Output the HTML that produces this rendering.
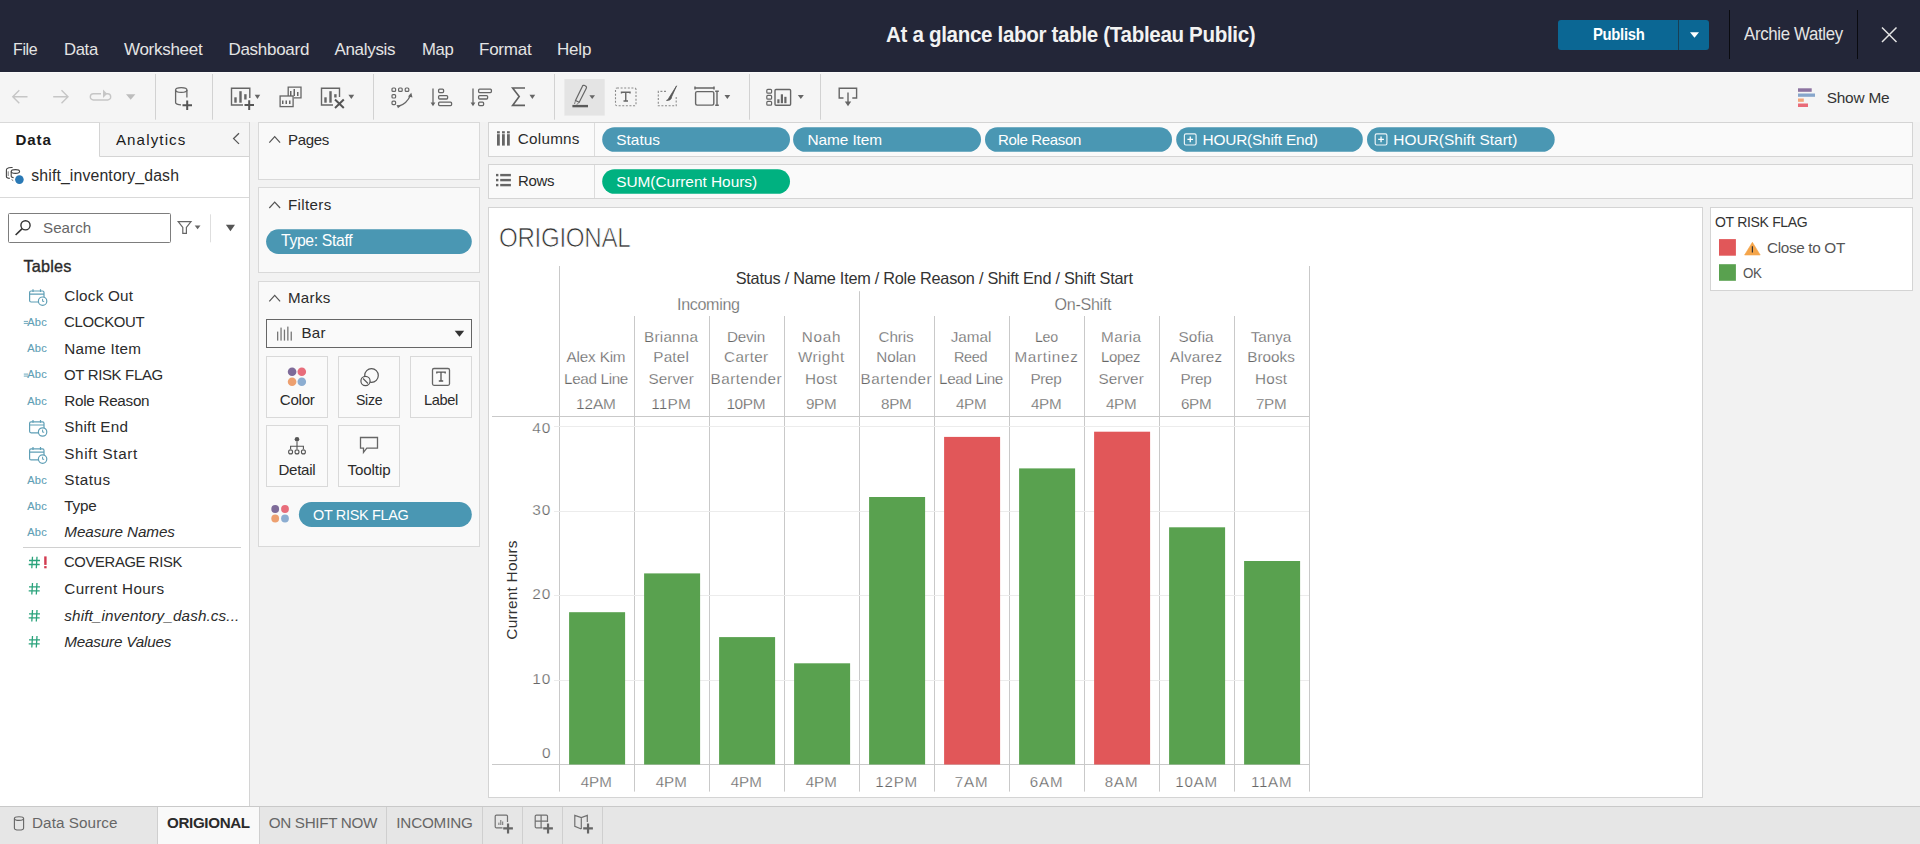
<!DOCTYPE html>
<html><head><meta charset="utf-8"><title>Tableau</title>
<style>
*{box-sizing:border-box;margin:0;padding:0}
html,body{width:1920px;height:844px;overflow:hidden;background:#f2f2f2;font-family:"Liberation Sans",sans-serif}
svg.bg{position:absolute;left:0;top:0}
.t{position:absolute;white-space:nowrap}
</style></head><body>
<svg class="bg" width="1920" height="844" viewBox="0 0 1920 844">
<rect x="0" y="0" width="1920" height="844" fill="#f2f2f2"/>
<rect x="0" y="0" width="1920" height="72" fill="#232638"/>
<rect x="0" y="72" width="1920" height="50" fill="#f5f5f5"/>
<rect x="1558" y="20" width="151" height="30" fill="#0b6794" rx="3"/>
<line x1="1678.5" y1="20" x2="1678.5" y2="50" stroke="#183f55" stroke-width="1"/>
<path d="M1690 32.2H1699L1694.5 37.7Z" fill="#ffffff" stroke="none" stroke-width="1"/>
<line x1="1729.5" y1="10" x2="1729.5" y2="59" stroke="#0a0b10" stroke-width="1"/>
<line x1="1857.5" y1="10" x2="1857.5" y2="59" stroke="#0a0b10" stroke-width="1"/>
<path d="M1882 27.5L1896.5 42M1896.5 27.5L1882 42" fill="none" stroke="#e4e4e4" stroke-width="1.5"/>
<line x1="0" y1="72.5" x2="1920" y2="72.5" stroke="#fafafa" stroke-width="1"/>
<line x1="155.5" y1="74" x2="155.5" y2="119.7" stroke="#d2d2d2" stroke-width="1"/>
<line x1="212.5" y1="74" x2="212.5" y2="119.7" stroke="#d2d2d2" stroke-width="1"/>
<line x1="373.5" y1="74" x2="373.5" y2="119.7" stroke="#d2d2d2" stroke-width="1"/>
<line x1="554.5" y1="74" x2="554.5" y2="119.7" stroke="#d2d2d2" stroke-width="1"/>
<line x1="749.5" y1="74" x2="749.5" y2="119.7" stroke="#d2d2d2" stroke-width="1"/>
<line x1="820.5" y1="74" x2="820.5" y2="119.7" stroke="#d2d2d2" stroke-width="1"/>
<path d="M27.5 96.8H12.8M19.3 90.3L12.8 96.8L19.3 103.3" fill="none" stroke="#c6c6c6" stroke-width="1.4"/>
<path d="M53.2 96.8H68M61.5 90.3L68 96.8L61.5 103.3" fill="none" stroke="#c6c6c6" stroke-width="1.4"/>
<path d="M101 93.8H93.4A3.1 3.1 0 0 0 93.4 100H107.6A3.1 3.1 0 0 0 107.6 93.8H106" fill="none" stroke="#c6c6c6" stroke-width="1.4"/>
<path d="M103 89.5L107.2 93.8L103 98Z" fill="#c6c6c6" stroke="none" stroke-width="1"/>
<path d="M126 94.2H135.4L130.7 99.8Z" fill="#bdbdbd" stroke="none" stroke-width="1"/>
<path d="M175.6 90V102.5A5.5 2.2 0 0 0 181 104.8M186.9 90V97.5" fill="none" stroke="#666" stroke-width="1.3"/>
<ellipse cx="181.25" cy="90" rx="5.7" ry="2.4" fill="none" stroke="#666" stroke-width="1.3"/>
<path d="M182.5 105.2H192M187.2 100.4V110" fill="none" stroke="#555" stroke-width="2"/>
<path d="M243 105H231.5V88.3H249.8V98" fill="none" stroke="#666" stroke-width="1.4"/>
<rect x="234.3" y="97.3" width="2.3999999999999773" height="5.400000000000006" fill="#666"/>
<rect x="239.3" y="91.2" width="2.3999999999999773" height="11.5" fill="#666"/>
<rect x="244.2" y="94.2" width="2.4000000000000057" height="5.299999999999997" fill="#666"/>
<path d="M244.5 105H254M249.2 100.3V110" fill="none" stroke="#555" stroke-width="2"/>
<path d="M254.7 94.8H260.2L257.45 99Z" fill="#666" stroke="none" stroke-width="1"/>
<path d="M288.2 96V87.1H301V97.8H294" fill="none" stroke="#666" stroke-width="1.3"/>
<rect x="290" y="91" width="1.5" height="5" fill="#666"/>
<rect x="293.5" y="89" width="1.5" height="7" fill="#666"/>
<rect x="297" y="92" width="1.5" height="4" fill="#666"/>
<rect x="280.1" y="96" width="13.0" height="10.599999999999994" fill="none" stroke="#666" stroke-width="1.3"/>
<rect x="282" y="100.5" width="1.5" height="3.5" fill="#666"/>
<rect x="285.5" y="100.5" width="1.5" height="3.5" fill="#666"/>
<rect x="289" y="100.5" width="1.5" height="3.5" fill="#666"/>
<path d="M333 105H321.5V88.3H339.5V97" fill="none" stroke="#666" stroke-width="1.4"/>
<rect x="324.3" y="97.3" width="2.3999999999999773" height="5.400000000000006" fill="#666"/>
<rect x="329.3" y="91.2" width="2.3999999999999773" height="11.5" fill="#666"/>
<rect x="334.2" y="94.2" width="2.400000000000034" height="3.299999999999997" fill="#666"/>
<path d="M335 99.5L343.8 108M343.8 99.5L335 108" fill="none" stroke="#555" stroke-width="2"/>
<path d="M348.4 94.8H354.2L351.29999999999995 99Z" fill="#666" stroke="none" stroke-width="1"/>
<rect x="392" y="88" width="3.6000000000000227" height="3.4000000000000057" fill="none" stroke="#666" stroke-width="1.2" rx="1"/>
<rect x="398.6" y="88" width="3.6000000000000227" height="3.4000000000000057" fill="none" stroke="#666" stroke-width="1.2" rx="1"/>
<rect x="405.2" y="88" width="3.6000000000000227" height="3.4000000000000057" fill="none" stroke="#666" stroke-width="1.2" rx="1"/>
<rect x="392" y="94.6" width="3.6000000000000227" height="3.4000000000000057" fill="none" stroke="#666" stroke-width="1.2" rx="1"/>
<rect x="392" y="101.2" width="3.6000000000000227" height="3.4000000000000057" fill="none" stroke="#666" stroke-width="1.2" rx="1"/>
<path d="M398 106.5Q407 104 410.5 95" fill="none" stroke="#666" stroke-width="1.3"/>
<path d="M408 96.5L411.3 92.8L412.5 97.5Z" fill="#666" stroke="none" stroke-width="1"/>
<path d="M396.5 105L398 108.2L401 105.5Z" fill="#666" stroke="none" stroke-width="1"/>
<path d="M433 88.5V105" fill="none" stroke="#666" stroke-width="1.3"/>
<path d="M430.6 102.5L433 106.3L435.4 102.5Z" fill="#666" stroke="none" stroke-width="1"/>
<rect x="438.6" y="89.2" width="5.0" height="3.3999999999999915" fill="none" stroke="#666" stroke-width="1.3" rx="1"/>
<rect x="438.6" y="95.6" width="9.0" height="3.4000000000000057" fill="none" stroke="#666" stroke-width="1.3" rx="1"/>
<rect x="438.6" y="102.2" width="13.0" height="3.3999999999999915" fill="none" stroke="#666" stroke-width="1.3" rx="1"/>
<path d="M473 88.5V105" fill="none" stroke="#666" stroke-width="1.3"/>
<path d="M470.6 102.5L473 106.3L475.4 102.5Z" fill="#666" stroke="none" stroke-width="1"/>
<rect x="478.6" y="89.2" width="12.799999999999955" height="3.3999999999999915" fill="none" stroke="#666" stroke-width="1.3" rx="1"/>
<rect x="478.6" y="95.6" width="9.0" height="3.4000000000000057" fill="none" stroke="#666" stroke-width="1.3" rx="1"/>
<rect x="478.6" y="102.2" width="5.0" height="3.3999999999999915" fill="none" stroke="#666" stroke-width="1.3" rx="1"/>
<path d="M525 88H512.6L519.2 96.6L512.6 105.4H525" fill="none" stroke="#606060" stroke-width="1.6"/>
<path d="M529.5 94.8H535.2L532.35 99Z" fill="#666" stroke="none" stroke-width="1"/>
<rect x="564.4" y="79.1" width="40.30000000000007" height="36.5" fill="#e4e4e4"/>
<path d="M575.5 100.5L582.3 86.5A1.6 1.6 0 0 1 584.8 85.6L585.6 86.1A1.6 1.6 0 0 1 586.3 88.3L579.2 102.3Z" fill="none" stroke="#666" stroke-width="1.2"/>
<path d="M575.5 100.5L574.5 104M579.2 102.3L576.5 104.8" fill="none" stroke="#666" stroke-width="0.8"/>
<rect x="572.4" y="104.9" width="15.600000000000023" height="2.3999999999999915" fill="#5a5a5a"/>
<path d="M589.4 95.3H595L592.2 99Z" fill="#666" stroke="none" stroke-width="1"/>
<rect x="615.5" y="88" width="20.5" height="17.799999999999997" fill="none" stroke="#8a8a8a" stroke-width="1.1" rx="1.5" stroke-dasharray="2,1.6"/>
<path d="M621.5 93.6V92.3H630V93.6M625.75 92.3V101M623.5 101H628" fill="none" stroke="#666" stroke-width="1.4"/>
<path d="M666 91.4H658.3V105.8H676.2V96" fill="none" stroke="#8a8a8a" stroke-width="1.1" stroke-dasharray="2,1.6"/>
<path d="M676.6 85.8L669.2 97.5L668 99.8L666.5 100.4L669.8 100Q672 98 671.5 97Z" fill="#555" stroke="#555" stroke-width="0.8"/>
<path d="M695 86.5V89.5M695 88H714M714 86.5V89.5" fill="none" stroke="#666" stroke-width="1.5"/>
<rect x="695.6" y="91.6" width="18.199999999999932" height="13.5" fill="none" stroke="#666" stroke-width="1.4" rx="1.5"/>
<path d="M715.2 91.3H718.8M717 91.3V105.3M715.2 105.3H718.8" fill="none" stroke="#666" stroke-width="1.4"/>
<path d="M724.5 95H730.2L727.35 99Z" fill="#666" stroke="none" stroke-width="1"/>
<rect x="766.8" y="89.4" width="4.800000000000068" height="3.799999999999997" fill="none" stroke="#666" stroke-width="1.2" rx="1"/>
<rect x="766.8" y="95.4" width="4.800000000000068" height="3.799999999999997" fill="none" stroke="#666" stroke-width="1.2" rx="1"/>
<rect x="766.8" y="101.4" width="4.800000000000068" height="3.799999999999997" fill="none" stroke="#666" stroke-width="1.2" rx="1"/>
<rect x="775" y="89.5" width="15.600000000000023" height="15.799999999999997" fill="none" stroke="#666" stroke-width="1.4" rx="1"/>
<rect x="777.3" y="99.3" width="2.2000000000000455" height="3.9000000000000057" fill="#666"/>
<rect x="780.8" y="94.3" width="2.2000000000000455" height="8.900000000000006" fill="#666"/>
<rect x="784.3" y="96.8" width="2.2000000000000455" height="6.400000000000006" fill="#666"/>
<path d="M797.8 95H803.8L800.8 99Z" fill="#666" stroke="none" stroke-width="1"/>
<path d="M843.5 98H839.2V88.2H856.6V98H852.3" fill="none" stroke="#666" stroke-width="1.4"/>
<path d="M848 92.5V103.5" fill="none" stroke="#666" stroke-width="1.4"/>
<path d="M844.8 101.5L848 106.2L851.2 101.5Z" fill="#666" stroke="none" stroke-width="1"/>
<rect x="1798" y="88.3" width="13.700000000000045" height="3.5" fill="#8c73a0"/>
<rect x="1798" y="93.5" width="17" height="3.299999999999997" fill="#87a6cb"/>
<rect x="1798" y="98.5" width="5.7999999999999545" height="3.299999999999997" fill="#f2a57a"/>
<rect x="1798" y="103.5" width="10" height="3.5" fill="#e96b78"/>
<rect x="0" y="122" width="249.5" height="684.3" fill="#ffffff"/>
<line x1="0" y1="122.5" x2="249.5" y2="122.5" stroke="#d9d9d9" stroke-width="1"/>
<line x1="249.5" y1="122" x2="249.5" y2="806" stroke="#d4d4d4" stroke-width="1"/>
<rect x="99.6" y="122.5" width="149.4" height="34.0" fill="#f5f5f5"/>
<line x1="99.5" y1="122.5" x2="99.5" y2="156.5" stroke="#d4d4d4" stroke-width="1"/>
<line x1="99.5" y1="156.5" x2="249" y2="156.5" stroke="#d4d4d4" stroke-width="1"/>
<path d="M239 133.3L233.6 138.6L239 143.9" fill="none" stroke="#555" stroke-width="1.3"/>
<path d="M12.6 167.5Q8.6 167.3 7 168.6Q6.4 169.3 6.4 170.2V176.6Q6.6 178.2 9.8 178.4" fill="none" stroke="#444" stroke-width="1.1"/>
<path d="M8.2 171.3V176" fill="none" stroke="#444" stroke-width="0.7"/>
<ellipse cx="15.4" cy="171.5" rx="4.2" ry="1.9" fill="#ffffff" stroke="#444" stroke-width="1.1"/>
<path d="M11.2 171.5V176.3Q11.5 177.5 13.6 177.6" fill="none" stroke="#444" stroke-width="1.1"/>
<path d="M11.6 179.6L13.2 180.6" fill="none" stroke="#444" stroke-width="0.8"/>
<circle cx="19.4" cy="179.6" r="4.3" fill="#2a79b5"/>
<line x1="0" y1="197.5" x2="249" y2="197.5" stroke="#d9d9d9" stroke-width="1"/>
<rect x="8.5" y="213.5" width="162.0" height="29.0" fill="#ffffff" stroke="#7d7d7d" stroke-width="1" rx="1"/>
<circle cx="25.5" cy="225.3" r="4.6" fill="none" stroke="#333" stroke-width="1.4"/>
<path d="M22.2 228.6L15.6 235" fill="none" stroke="#333" stroke-width="1.6"/>
<path d="M178.2 221.6H191L186.4 227.5V233.4H182.8V227.5Z" fill="none" stroke="#666" stroke-width="1.2"/>
<path d="M194.7 225.4H200.5L197.6 229.3Z" fill="#666" stroke="none" stroke-width="1"/>
<line x1="210.5" y1="214.3" x2="210.5" y2="242.3" stroke="#dedede" stroke-width="1"/>
<path d="M225.9 224.7H235L230.45 231.3Z" fill="#555" stroke="none" stroke-width="1"/>
<rect x="29.6" y="291.0" width="14.399999999999999" height="11.0" fill="none" stroke="#5f9fb6" stroke-width="1.2" rx="1.5"/>
<path d="M29.6 294.2H44M33 289.2V292.0M40.5 289.2V292.0" fill="none" stroke="#5f9fb6" stroke-width="1.2"/>
<circle cx="42.6" cy="301.2" r="4.2" fill="#ffffff" stroke="#5f9fb6" stroke-width="1.2"/>
<path d="M42.6 298.8V301.4H44.2" fill="none" stroke="#5f9fb6" stroke-width="1"/>
<path d="M23.8 321.4H28M23.8 323.4H28" fill="none" stroke="#5f9fb6" stroke-width="0.9"/>
<path d="M23.8 374.1H28M23.8 376.1H28" fill="none" stroke="#5f9fb6" stroke-width="0.9"/>
<rect x="29.6" y="421.8" width="14.399999999999999" height="11.0" fill="none" stroke="#5f9fb6" stroke-width="1.2" rx="1.5"/>
<path d="M29.6 425.0H44M33 420.0V422.8M40.5 420.0V422.8" fill="none" stroke="#5f9fb6" stroke-width="1.2"/>
<circle cx="42.6" cy="432.0" r="4.2" fill="#ffffff" stroke="#5f9fb6" stroke-width="1.2"/>
<path d="M42.6 429.6V432.2H44.2" fill="none" stroke="#5f9fb6" stroke-width="1"/>
<rect x="29.6" y="448.90000000000003" width="14.399999999999999" height="11.0" fill="none" stroke="#5f9fb6" stroke-width="1.2" rx="1.5"/>
<path d="M29.6 452.1H44M33 447.1V449.90000000000003M40.5 447.1V449.90000000000003" fill="none" stroke="#5f9fb6" stroke-width="1.2"/>
<circle cx="42.6" cy="459.1" r="4.2" fill="#ffffff" stroke="#5f9fb6" stroke-width="1.2"/>
<path d="M42.6 456.70000000000005V459.3H44.2" fill="none" stroke="#5f9fb6" stroke-width="1"/>
<path d="M32.5 556.7L31.8 568.2M37 556.7L36.3 568.2M29 560.5H40M28.7 564.5H39.7" fill="none" stroke="#2ba37c" stroke-width="1.3"/>
<rect x="44.2" y="556.4000000000001" width="2.3999999999999986" height="8.5" fill="#d23b50"/>
<rect x="44.2" y="566.1" width="2.3999999999999986" height="2.2000000000000455" fill="#d23b50"/>
<path d="M32.5 583L31.8 594.5M37 583L36.3 594.5M29 586.8H40M28.7 590.8H39.7" fill="none" stroke="#2ba37c" stroke-width="1.3"/>
<path d="M32.5 610L31.8 621.5M37 610L36.3 621.5M29 613.8H40M28.7 617.8H39.7" fill="none" stroke="#2ba37c" stroke-width="1.3"/>
<path d="M32.5 636L31.8 647.5M37 636L36.3 647.5M29 639.8H40M28.7 643.8H39.7" fill="none" stroke="#2ba37c" stroke-width="1.3"/>
<line x1="23" y1="547.5" x2="241" y2="547.5" stroke="#d0d0d0" stroke-width="1"/>
<rect x="258.5" y="122.5" width="221.0" height="57.0" fill="#f9f9f9" stroke="#d9d9d9" stroke-width="1"/>
<rect x="258.5" y="187.5" width="221.0" height="85.0" fill="#f9f9f9" stroke="#d9d9d9" stroke-width="1"/>
<rect x="258.5" y="281.5" width="221.0" height="265.0" fill="#f9f9f9" stroke="#d9d9d9" stroke-width="1"/>
<path d="M269.3 142.6L274.7 136.7L280.1 142.6" fill="none" stroke="#555" stroke-width="1.2"/>
<path d="M269.3 208.0L274.7 202.1L280.1 208.0" fill="none" stroke="#555" stroke-width="1.2"/>
<path d="M269.3 301.3L274.7 295.40000000000003L280.1 301.3" fill="none" stroke="#555" stroke-width="1.2"/>
<rect x="266.1" y="229.3" width="205.7" height="24.599999999999994" fill="#4a97b3" rx="12.3"/>
<rect x="266.5" y="319.5" width="205.0" height="28.0" fill="#fafafa" stroke="#666" stroke-width="1"/>
<rect x="277.0" y="331.6" width="1.3000000000000114" height="9.0" fill="#777"/>
<rect x="280.4" y="327.6" width="1.3000000000000114" height="13.0" fill="#777"/>
<rect x="283.8" y="329.6" width="1.3000000000000114" height="11.0" fill="#777"/>
<rect x="287.2" y="326.6" width="1.3000000000000114" height="14.0" fill="#777"/>
<rect x="290.6" y="331.6" width="1.3000000000000114" height="9.0" fill="#777"/>
<path d="M454.7 330.7H464.2L459.45 336.8Z" fill="#333" stroke="none" stroke-width="1"/>
<rect x="266.5" y="356.5" width="61.0" height="61.0" fill="#fafafa" stroke="#d9d9d9" stroke-width="1"/>
<rect x="338.5" y="356.5" width="61.0" height="61.0" fill="#fafafa" stroke="#d9d9d9" stroke-width="1"/>
<rect x="410.5" y="356.5" width="61.0" height="61.0" fill="#fafafa" stroke="#d9d9d9" stroke-width="1"/>
<rect x="266.5" y="425.5" width="61.0" height="61.0" fill="#fafafa" stroke="#d9d9d9" stroke-width="1"/>
<rect x="338.5" y="425.5" width="61.0" height="61.0" fill="#fafafa" stroke="#d9d9d9" stroke-width="1"/>
<circle cx="292.1" cy="371.8" r="4.3" fill="#7e6b99"/>
<circle cx="301.8" cy="371.8" r="4.3" fill="#e86d7b"/>
<circle cx="292.1" cy="381.7" r="4.3" fill="#eda070"/>
<circle cx="301.8" cy="381.7" r="4.3" fill="#8cadd1"/>
<circle cx="371.5" cy="375.5" r="6.8" fill="none" stroke="#555" stroke-width="1.2"/>
<circle cx="365.5" cy="381" r="4.6" fill="#f9f9f9" stroke="#555" stroke-width="1.2"/>
<path d="M363 378.5L368 383.5" fill="none" stroke="#555" stroke-width="1.1"/>
<rect x="432.5" y="368.5" width="17.0" height="16.80000000000001" fill="none" stroke="#666" stroke-width="1.3" rx="1.5"/>
<path d="M436.8 373.5V372.2H445.2V373.5M441 372.2V381M438.8 381H443.2" fill="none" stroke="#555" stroke-width="1.3"/>
<circle cx="297" cy="439.3" r="2.3" fill="#555"/>
<path d="M297 441.5V446.2M290.6 449V446.2H303.4V449M297 446.2V449" fill="none" stroke="#555" stroke-width="1.1"/>
<circle cx="290.6" cy="451.9" r="2.0" fill="none" stroke="#555" stroke-width="1.1"/>
<circle cx="297" cy="451.9" r="2.0" fill="none" stroke="#555" stroke-width="1.1"/>
<circle cx="303.4" cy="451.9" r="2.0" fill="none" stroke="#555" stroke-width="1.1"/>
<path d="M360.5 437.5H377.5V448.2H366.8L363.5 452.3V448.2H360.5Z" fill="none" stroke="#666" stroke-width="1.3"/>
<circle cx="275.2" cy="509" r="3.9" fill="#7e6b99"/>
<circle cx="285" cy="509" r="3.9" fill="#e86d7b"/>
<circle cx="275.2" cy="518.5" r="3.9" fill="#eda070"/>
<circle cx="285" cy="518.5" r="3.9" fill="#8cadd1"/>
<rect x="298.9" y="502" width="172.90000000000003" height="25" fill="#4a97b3" rx="12.5"/>
<rect x="488.5" y="122.5" width="1424.0" height="34.0" fill="#fafafa" stroke="#d4d4d4" stroke-width="1"/>
<rect x="488.5" y="164.5" width="1424.0" height="34.0" fill="#fafafa" stroke="#d4d4d4" stroke-width="1"/>
<line x1="594.5" y1="123" x2="594.5" y2="156" stroke="#dcdcdc" stroke-width="1"/>
<line x1="594.5" y1="165" x2="594.5" y2="198" stroke="#dcdcdc" stroke-width="1"/>
<rect x="497" y="134.2" width="2.8000000000000114" height="11.400000000000006" fill="#666"/>
<rect x="497" y="131.2" width="2.8000000000000114" height="2.200000000000017" fill="#666"/>
<rect x="502" y="134.2" width="2.8000000000000114" height="11.400000000000006" fill="#666"/>
<rect x="502" y="131.2" width="2.8000000000000114" height="2.200000000000017" fill="#666"/>
<rect x="507" y="134.2" width="2.8000000000000114" height="11.400000000000006" fill="#666"/>
<rect x="507" y="131.2" width="2.8000000000000114" height="2.200000000000017" fill="#666"/>
<rect x="496" y="173.9" width="2.3999999999999773" height="2.3999999999999773" fill="#666"/>
<rect x="500.2" y="173.9" width="10.699999999999989" height="2.3999999999999773" fill="#666"/>
<rect x="496" y="178.9" width="2.3999999999999773" height="2.3999999999999773" fill="#666"/>
<rect x="500.2" y="178.9" width="10.699999999999989" height="2.3999999999999773" fill="#666"/>
<rect x="496" y="183.9" width="2.3999999999999773" height="2.3999999999999773" fill="#666"/>
<rect x="500.2" y="183.9" width="10.699999999999989" height="2.3999999999999773" fill="#666"/>
<rect x="602.2" y="127.2" width="187.79999999999995" height="24.60000000000001" fill="#4a97b3" rx="12.3"/>
<rect x="793.1" y="127.2" width="187.89999999999998" height="24.60000000000001" fill="#4a97b3" rx="12.3"/>
<rect x="985" y="127.2" width="187" height="24.60000000000001" fill="#4a97b3" rx="12.3"/>
<rect x="1176.2" y="127.2" width="186.5999999999999" height="24.60000000000001" fill="#4a97b3" rx="12.3"/>
<rect x="1184.3999999999999" y="133.9" width="11.700000000000045" height="11.099999999999994" fill="none" stroke="#eaf3f7" stroke-width="1.2" rx="1.5"/>
<path d="M1187.3999999999999 139.4H1193.1M1190.25 136.6V142.3" fill="none" stroke="#ffffff" stroke-width="1.3"/>
<rect x="1367" y="127.2" width="187.70000000000005" height="24.60000000000001" fill="#4a97b3" rx="12.3"/>
<rect x="1375.1999999999998" y="133.9" width="11.700000000000045" height="11.099999999999994" fill="none" stroke="#eaf3f7" stroke-width="1.2" rx="1.5"/>
<path d="M1378.1999999999998 139.4H1383.8999999999999M1381.05 136.6V142.3" fill="none" stroke="#ffffff" stroke-width="1.3"/>
<rect x="602.2" y="169.2" width="187.79999999999995" height="24.600000000000023" fill="#00b180" rx="12.3"/>
<rect x="488.5" y="207.5" width="1214.0" height="590.0" fill="#ffffff" stroke="#d4d4d4" stroke-width="1"/>
<line x1="559.5" y1="266" x2="559.5" y2="791.6" stroke="#c9c9c9" stroke-width="1"/>
<line x1="1309.5" y1="266" x2="1309.5" y2="791.6" stroke="#c9c9c9" stroke-width="1"/>
<line x1="859.5" y1="291.2" x2="859.5" y2="791.6" stroke="#c9c9c9" stroke-width="1"/>
<line x1="634.5" y1="316" x2="634.5" y2="791.6" stroke="#c9c9c9" stroke-width="1"/>
<line x1="709.5" y1="316" x2="709.5" y2="791.6" stroke="#c9c9c9" stroke-width="1"/>
<line x1="784.5" y1="316" x2="784.5" y2="791.6" stroke="#c9c9c9" stroke-width="1"/>
<line x1="934.5" y1="316" x2="934.5" y2="791.6" stroke="#c9c9c9" stroke-width="1"/>
<line x1="1009.5" y1="316" x2="1009.5" y2="791.6" stroke="#c9c9c9" stroke-width="1"/>
<line x1="1084.5" y1="316" x2="1084.5" y2="791.6" stroke="#c9c9c9" stroke-width="1"/>
<line x1="1159.5" y1="316" x2="1159.5" y2="791.6" stroke="#c9c9c9" stroke-width="1"/>
<line x1="1234.5" y1="316" x2="1234.5" y2="791.6" stroke="#c9c9c9" stroke-width="1"/>
<line x1="554" y1="426.5" x2="1309" y2="426.5" stroke="#ececec" stroke-width="1"/>
<line x1="554" y1="511.5" x2="1309" y2="511.5" stroke="#ececec" stroke-width="1"/>
<line x1="554" y1="595.5" x2="1309" y2="595.5" stroke="#ececec" stroke-width="1"/>
<line x1="554" y1="680.5" x2="1309" y2="680.5" stroke="#ececec" stroke-width="1"/>
<line x1="492" y1="416.5" x2="1309.5" y2="416.5" stroke="#c9c9c9" stroke-width="1"/>
<line x1="492" y1="764.5" x2="1309.5" y2="764.5" stroke="#c9c9c9" stroke-width="1"/>
<rect x="569.1" y="612.2" width="56.0" height="152.29999999999995" fill="#59a14f"/>
<rect x="644.1" y="573.4" width="56.0" height="191.10000000000002" fill="#59a14f"/>
<rect x="719.1" y="637.1" width="56.0" height="127.39999999999998" fill="#59a14f"/>
<rect x="794.1" y="663.3" width="56.0" height="101.20000000000005" fill="#59a14f"/>
<rect x="869.1" y="497" width="56.0" height="267.5" fill="#59a14f"/>
<rect x="944.1" y="436.9" width="56.0" height="327.6" fill="#e15759"/>
<rect x="1019.1" y="468.4" width="55.999999999999886" height="296.1" fill="#59a14f"/>
<rect x="1094.1" y="431.7" width="56.0" height="332.8" fill="#e15759"/>
<rect x="1169.1" y="527.3" width="56.0" height="237.20000000000005" fill="#59a14f"/>
<rect x="1244.1" y="561" width="56.0" height="203.5" fill="#59a14f"/>
<rect x="1710.5" y="207.5" width="202.0" height="83.0" fill="#ffffff" stroke="#d4d4d4" stroke-width="1"/>
<rect x="1719" y="239.1" width="16.90000000000009" height="16.599999999999994" fill="#e15759"/>
<rect x="1719" y="264.2" width="16.90000000000009" height="16.600000000000023" fill="#59a14f"/>
<path d="M1752.4 242.3L1760.2 255H1744.6Z" fill="#f5a54a" stroke="#f5a54a" stroke-width="0.6" stroke-linejoin="round"/>
<path d="M1752.4 246.2V252.4" fill="none" stroke="#333" stroke-width="1.2"/>
<rect x="0" y="806" width="1920" height="38" fill="#e6e6e6"/>
<line x1="0" y1="806.5" x2="1920" y2="806.5" stroke="#c9c9c9" stroke-width="1"/>
<rect x="157.5" y="807" width="101.69999999999999" height="37" fill="#f9f9f9"/>
<line x1="157.5" y1="807" x2="157.5" y2="844" stroke="#cfcfcf" stroke-width="1"/>
<line x1="259.5" y1="807" x2="259.5" y2="844" stroke="#cfcfcf" stroke-width="1"/>
<line x1="386.5" y1="807" x2="386.5" y2="844" stroke="#cfcfcf" stroke-width="1"/>
<line x1="482.5" y1="807" x2="482.5" y2="844" stroke="#cfcfcf" stroke-width="1"/>
<line x1="522.5" y1="807" x2="522.5" y2="844" stroke="#cfcfcf" stroke-width="1"/>
<line x1="562.5" y1="807" x2="562.5" y2="844" stroke="#cfcfcf" stroke-width="1"/>
<line x1="602.5" y1="807" x2="602.5" y2="844" stroke="#cfcfcf" stroke-width="1"/>
<ellipse cx="19" cy="818.6" rx="4.6" ry="1.8" fill="none" stroke="#666" stroke-width="1.1"/>
<path d="M14.4 818.6V828.2A4.6 1.8 0 0 0 23.6 828.2V818.6" fill="none" stroke="#666" stroke-width="1.1"/>
<path d="M502.5 827.9H496.4Q495.2 827.9 495.2 826.7V816.3Q495.2 815.1 496.4 815.1H506.3Q507.5 815.1 507.5 816.3V822" fill="none" stroke="#707070" stroke-width="1.2"/>
<rect x="498.4" y="822.6" width="1.0" height="2.3999999999999773" fill="#707070"/>
<rect x="500.3" y="820" width="1.0" height="5" fill="#707070"/>
<rect x="502.2" y="821.5" width="1.0" height="3.5" fill="#707070"/>
<path d="M503.2 828.3H512.9M508.05 823.6V833.6" fill="none" stroke="#666" stroke-width="2.2"/>
<path d="M542.5 827.9H536.4Q535.2 827.9 535.2 826.7V816.3Q535.2 815.1 536.4 815.1H546.3Q547.5 815.1 547.5 816.3V822M535.2 821.2H547.5M541.1 815.1V827.9" fill="none" stroke="#707070" stroke-width="1.2"/>
<path d="M543.2 828.3H552.9M548.05 823.6V833.6" fill="none" stroke="#666" stroke-width="2.2"/>
<path d="M581.3 829L574.8 826.3V815.4L581.3 817.5L587.3 815.4V822M581.3 817.5V829" fill="none" stroke="#707070" stroke-width="1.2"/>
<path d="M583.2 828.3H592.9M588.05 823.6V833.6" fill="none" stroke="#666" stroke-width="2.2"/>
</svg>
<div class="t" style="left:13.30px;top:40.60px;font-size:17.01px;line-height:17.01px;color:#e4e4e4;letter-spacing:-0.350px;transform:scaleX(0.9374);transform-origin:0 0;">File</div>
<div class="t" style="left:63.75px;top:40.60px;font-size:17.01px;line-height:17.01px;color:#e4e4e4;letter-spacing:-0.350px;transform:scaleX(0.9800);transform-origin:0 0;">Data</div>
<div class="t" style="left:124.00px;top:40.60px;font-size:17.01px;line-height:17.01px;color:#e4e4e4;letter-spacing:-0.288px;">Worksheet</div>
<div class="t" style="left:228.40px;top:40.60px;font-size:17.01px;line-height:17.01px;color:#e4e4e4;letter-spacing:-0.275px;">Dashboard</div>
<div class="t" style="left:334.40px;top:40.60px;font-size:17.01px;line-height:17.01px;color:#e4e4e4;letter-spacing:-0.300px;">Analysis</div>
<div class="t" style="left:421.60px;top:40.60px;font-size:17.01px;line-height:17.01px;color:#e4e4e4;letter-spacing:-0.350px;transform:scaleX(0.9815);transform-origin:0 0;">Map</div>
<div class="t" style="left:479.00px;top:40.60px;font-size:17.01px;line-height:17.01px;color:#e4e4e4;letter-spacing:-0.240px;">Format</div>
<div class="t" style="left:557.00px;top:40.60px;font-size:17.01px;line-height:17.01px;color:#e4e4e4;letter-spacing:-0.200px;">Help</div>
<div class="t" style="left:885.80px;top:24.27px;font-size:22.24px;line-height:22.24px;color:#f2f2f2;font-weight:bold;letter-spacing:-0.350px;transform:scaleX(0.9247);transform-origin:0 0;">At a glance labor table (Tableau Public)</div>
<div class="t" style="left:1592.50px;top:26.69px;font-size:15.84px;line-height:15.84px;color:#ffffff;font-weight:bold;letter-spacing:-0.350px;transform:scaleX(0.9398);transform-origin:0 0;">Publish</div>
<div class="t" style="left:1744.00px;top:25.56px;font-size:17.88px;line-height:17.88px;color:#e4e4e4;letter-spacing:-0.350px;transform:scaleX(0.9416);transform-origin:0 0;">Archie Watley</div>
<div class="t" style="left:1826.70px;top:89.75px;font-size:15.41px;line-height:15.41px;color:#333;letter-spacing:-0.217px;">Show Me</div>
<div class="t" style="left:15.60px;top:132.00px;font-size:15.12px;line-height:15.12px;color:#1a1a1a;font-weight:bold;letter-spacing:0.833px;">Data</div>
<div class="t" style="left:115.90px;top:132.00px;font-size:15.12px;line-height:15.12px;color:#1a1a1a;letter-spacing:1.125px;">Analytics</div>
<div class="t" style="left:31.25px;top:168.09px;font-size:15.84px;line-height:15.84px;color:#2b2b2b;letter-spacing:0.132px;">shift_inventory_dash</div>
<div class="t" style="left:43.00px;top:220.00px;font-size:15.12px;line-height:15.12px;color:#666;letter-spacing:0.060px;">Search</div>
<div class="t" style="left:23.40px;top:257.62px;font-size:16.28px;line-height:16.28px;color:#2b2b2b;letter-spacing:0.200px;-webkit-text-stroke:0.35px #2b2b2b;">Tables</div>
<div class="t" style="left:64.30px;top:287.98px;font-size:15.26px;line-height:15.26px;color:#2b2b2b;letter-spacing:0.213px;">Clock Out</div>
<div class="t" style="left:64.30px;top:313.98px;font-size:15.26px;line-height:15.26px;color:#2b2b2b;letter-spacing:-0.350px;transform:scaleX(0.9799);transform-origin:0 0;">CLOCKOUT</div>
<div class="t" style="left:27.20px;top:316.65px;font-size:11.05px;line-height:11.05px;color:#5f9fb6;letter-spacing:0.250px;-webkit-text-stroke:0.15px #5f9fb6;">Abc</div>
<div class="t" style="left:64.30px;top:340.68px;font-size:15.26px;line-height:15.26px;color:#2b2b2b;letter-spacing:0.275px;">Name Item</div>
<div class="t" style="left:27.20px;top:343.35px;font-size:11.05px;line-height:11.05px;color:#5f9fb6;letter-spacing:0.250px;-webkit-text-stroke:0.15px #5f9fb6;">Abc</div>
<div class="t" style="left:64.30px;top:366.68px;font-size:15.26px;line-height:15.26px;color:#2b2b2b;letter-spacing:-0.350px;transform:scaleX(0.9827);transform-origin:0 0;">OT RISK FLAG</div>
<div class="t" style="left:27.20px;top:369.35px;font-size:11.05px;line-height:11.05px;color:#5f9fb6;letter-spacing:0.250px;-webkit-text-stroke:0.15px #5f9fb6;">Abc</div>
<div class="t" style="left:64.30px;top:392.88px;font-size:15.26px;line-height:15.26px;color:#2b2b2b;letter-spacing:-0.290px;">Role Reason</div>
<div class="t" style="left:27.20px;top:395.55px;font-size:11.05px;line-height:11.05px;color:#5f9fb6;letter-spacing:0.250px;-webkit-text-stroke:0.15px #5f9fb6;">Abc</div>
<div class="t" style="left:64.30px;top:418.78px;font-size:15.26px;line-height:15.26px;color:#2b2b2b;letter-spacing:0.213px;">Shift End</div>
<div class="t" style="left:64.30px;top:445.88px;font-size:15.26px;line-height:15.26px;color:#2b2b2b;letter-spacing:0.590px;">Shift Start</div>
<div class="t" style="left:64.30px;top:471.98px;font-size:15.26px;line-height:15.26px;color:#2b2b2b;letter-spacing:0.500px;">Status</div>
<div class="t" style="left:27.20px;top:474.65px;font-size:11.05px;line-height:11.05px;color:#5f9fb6;letter-spacing:0.250px;-webkit-text-stroke:0.15px #5f9fb6;">Abc</div>
<div class="t" style="left:64.30px;top:498.18px;font-size:15.26px;line-height:15.26px;color:#2b2b2b;letter-spacing:-0.200px;">Type</div>
<div class="t" style="left:27.20px;top:500.85px;font-size:11.05px;line-height:11.05px;color:#5f9fb6;letter-spacing:0.250px;-webkit-text-stroke:0.15px #5f9fb6;">Abc</div>
<div class="t" style="left:64.30px;top:524.38px;font-size:15.26px;line-height:15.26px;color:#2b2b2b;font-style:italic;letter-spacing:-0.100px;">Measure Names</div>
<div class="t" style="left:27.20px;top:527.05px;font-size:11.05px;line-height:11.05px;color:#5f9fb6;letter-spacing:0.250px;-webkit-text-stroke:0.15px #5f9fb6;">Abc</div>
<div class="t" style="left:64.30px;top:554.28px;font-size:15.26px;line-height:15.26px;color:#2b2b2b;letter-spacing:-0.350px;transform:scaleX(0.9697);transform-origin:0 0;">COVERAGE RISK</div>
<div class="t" style="left:64.30px;top:580.58px;font-size:15.26px;line-height:15.26px;color:#2b2b2b;letter-spacing:0.333px;">Current Hours</div>
<div class="t" style="left:64.30px;top:607.58px;font-size:15.26px;line-height:15.26px;color:#2b2b2b;font-style:italic;letter-spacing:0.116px;">shift_inventory_dash.cs...</div>
<div class="t" style="left:64.30px;top:633.58px;font-size:15.26px;line-height:15.26px;color:#2b2b2b;font-style:italic;letter-spacing:-0.200px;">Measure Values</div>
<div class="t" style="left:287.90px;top:131.70px;font-size:15.12px;line-height:15.12px;color:#2b2b2b;letter-spacing:-0.350px;transform:scaleX(0.9927);transform-origin:0 0;">Pages</div>
<div class="t" style="left:287.90px;top:197.10px;font-size:15.12px;line-height:15.12px;color:#2b2b2b;letter-spacing:0.383px;">Filters</div>
<div class="t" style="left:287.90px;top:290.40px;font-size:15.12px;line-height:15.12px;color:#2b2b2b;letter-spacing:0.350px;">Marks</div>
<div class="t" style="left:280.70px;top:233.36px;font-size:15.99px;line-height:15.99px;color:#ffffff;letter-spacing:-0.350px;transform:scaleX(0.9849);transform-origin:0 0;">Type: Staff</div>
<div class="t" style="left:301.60px;top:325.30px;font-size:15.12px;line-height:15.12px;color:#2b2b2b;letter-spacing:0.200px;">Bar</div>
<div class="t" style="left:279.80px;top:392.20px;font-size:15.12px;line-height:15.12px;color:#2b2b2b;letter-spacing:-0.275px;">Color</div>
<div class="t" style="left:355.80px;top:392.20px;font-size:15.12px;line-height:15.12px;color:#2b2b2b;letter-spacing:-0.350px;transform:scaleX(0.9343);transform-origin:0 0;">Size</div>
<div class="t" style="left:423.50px;top:392.20px;font-size:15.12px;line-height:15.12px;color:#2b2b2b;letter-spacing:-0.350px;transform:scaleX(0.9660);transform-origin:0 0;">Label</div>
<div class="t" style="left:278.40px;top:462.10px;font-size:15.12px;line-height:15.12px;color:#2b2b2b;letter-spacing:-0.280px;">Detail</div>
<div class="t" style="left:347.60px;top:462.10px;font-size:15.12px;line-height:15.12px;color:#2b2b2b;letter-spacing:-0.117px;">Tooltip</div>
<div class="t" style="left:312.60px;top:506.95px;font-size:15.41px;line-height:15.41px;color:#ffffff;letter-spacing:-0.350px;transform:scaleX(0.9381);transform-origin:0 0;">OT RISK FLAG</div>
<div class="t" style="left:517.80px;top:130.88px;font-size:15.26px;line-height:15.26px;color:#2b2b2b;letter-spacing:0.250px;">Columns</div>
<div class="t" style="left:517.80px;top:173.08px;font-size:15.26px;line-height:15.26px;color:#2b2b2b;letter-spacing:-0.350px;transform:scaleX(0.9825);transform-origin:0 0;">Rows</div>
<div class="t" style="left:616.20px;top:131.65px;font-size:15.41px;line-height:15.41px;color:#ffffff;letter-spacing:0.040px;">Status</div>
<div class="t" style="left:807.50px;top:131.65px;font-size:15.41px;line-height:15.41px;color:#ffffff;letter-spacing:-0.100px;">Name Item</div>
<div class="t" style="left:998.30px;top:131.65px;font-size:15.41px;line-height:15.41px;color:#ffffff;letter-spacing:-0.350px;transform:scaleX(0.9744);transform-origin:0 0;">Role Reason</div>
<div class="t" style="left:1202.50px;top:131.65px;font-size:15.41px;line-height:15.41px;color:#ffffff;letter-spacing:-0.193px;">HOUR(Shift End)</div>
<div class="t" style="left:1393.30px;top:131.65px;font-size:15.41px;line-height:15.41px;color:#ffffff;letter-spacing:0.044px;">HOUR(Shift Start)</div>
<div class="t" style="left:616.20px;top:173.65px;font-size:15.41px;line-height:15.41px;color:#ffffff;letter-spacing:-0.018px;">SUM(Current Hours)</div>
<div class="t" style="left:498.70px;top:224.63px;font-size:26.89px;line-height:26.89px;color:#333;letter-spacing:-0.350px;transform:scaleX(0.8981);transform-origin:0 0;-webkit-text-stroke:0.7px #ffffff;">ORIGIONAL</div>
<div class="t" style="left:735.75px;top:270.47px;font-size:16.28px;line-height:16.28px;color:#333;letter-spacing:-0.248px;">Status / Name Item / Role Reason / Shift End / Shift Start</div>
<div class="t" style="left:677.05px;top:295.84px;font-size:16.13px;line-height:16.13px;color:#666;letter-spacing:-0.343px;-webkit-text-stroke:0.25px #ffffff;">Incoming</div>
<div class="t" style="left:1054.55px;top:295.59px;font-size:16.13px;line-height:16.13px;color:#666;letter-spacing:-0.300px;-webkit-text-stroke:0.25px #ffffff;">On-Shift</div>
<div class="t" style="left:566.60px;top:348.98px;font-size:15.26px;line-height:15.26px;color:#666666;letter-spacing:-0.171px;-webkit-text-stroke:0.25px #ffffff;">Alex Kim</div>
<div class="t" style="left:564.10px;top:371.08px;font-size:15.26px;line-height:15.26px;color:#666666;letter-spacing:-0.350px;-webkit-text-stroke:0.25px #ffffff;">Lead Line</div>
<div class="t" style="left:576.05px;top:395.75px;font-size:15.41px;line-height:15.41px;color:#666666;letter-spacing:-0.133px;-webkit-text-stroke:0.25px #ffffff;">12AM</div>
<div class="t" style="left:644.10px;top:328.78px;font-size:15.26px;line-height:15.26px;color:#666666;letter-spacing:0.217px;-webkit-text-stroke:0.25px #ffffff;">Brianna</div>
<div class="t" style="left:653.30px;top:348.98px;font-size:15.26px;line-height:15.26px;color:#666666;letter-spacing:0.200px;-webkit-text-stroke:0.25px #ffffff;">Patel</div>
<div class="t" style="left:648.45px;top:371.08px;font-size:15.26px;line-height:15.26px;color:#666666;letter-spacing:0.080px;-webkit-text-stroke:0.25px #ffffff;">Server</div>
<div class="t" style="left:651.20px;top:395.75px;font-size:15.41px;line-height:15.41px;color:#666666;letter-spacing:0.167px;-webkit-text-stroke:0.25px #ffffff;">11PM</div>
<div class="t" style="left:726.90px;top:328.78px;font-size:15.26px;line-height:15.26px;color:#666666;letter-spacing:-0.150px;-webkit-text-stroke:0.25px #ffffff;">Devin</div>
<div class="t" style="left:724.10px;top:348.98px;font-size:15.26px;line-height:15.26px;color:#666666;letter-spacing:0.320px;-webkit-text-stroke:0.25px #ffffff;">Carter</div>
<div class="t" style="left:710.60px;top:371.08px;font-size:15.26px;line-height:15.26px;color:#666666;letter-spacing:0.500px;-webkit-text-stroke:0.25px #ffffff;">Bartender</div>
<div class="t" style="left:726.40px;top:395.75px;font-size:15.41px;line-height:15.41px;color:#666666;letter-spacing:-0.350px;-webkit-text-stroke:0.25px #ffffff;">10PM</div>
<div class="t" style="left:801.75px;top:328.78px;font-size:15.26px;line-height:15.26px;color:#666666;letter-spacing:0.730px;-webkit-text-stroke:0.25px #ffffff;">Noah</div>
<div class="t" style="left:797.89px;top:348.98px;font-size:15.26px;line-height:15.26px;color:#666666;letter-spacing:0.526px;-webkit-text-stroke:0.25px #ffffff;">Wright</div>
<div class="t" style="left:805.05px;top:371.08px;font-size:15.26px;line-height:15.26px;color:#666666;letter-spacing:0.233px;-webkit-text-stroke:0.25px #ffffff;">Host</div>
<div class="t" style="left:805.70px;top:395.75px;font-size:15.41px;line-height:15.41px;color:#666666;letter-spacing:-0.350px;transform:scaleX(0.9872);transform-origin:0 0;-webkit-text-stroke:0.25px #ffffff;">9PM</div>
<div class="t" style="left:878.45px;top:328.78px;font-size:15.26px;line-height:15.26px;color:#666666;letter-spacing:-0.075px;-webkit-text-stroke:0.25px #ffffff;">Chris</div>
<div class="t" style="left:876.25px;top:348.98px;font-size:15.26px;line-height:15.26px;color:#666666;letter-spacing:-0.025px;-webkit-text-stroke:0.25px #ffffff;">Nolan</div>
<div class="t" style="left:860.60px;top:371.08px;font-size:15.26px;line-height:15.26px;color:#666666;letter-spacing:0.500px;-webkit-text-stroke:0.25px #ffffff;">Bartender</div>
<div class="t" style="left:880.65px;top:395.75px;font-size:15.41px;line-height:15.41px;color:#666666;letter-spacing:-0.350px;transform:scaleX(0.9904);transform-origin:0 0;-webkit-text-stroke:0.25px #ffffff;">8PM</div>
<div class="t" style="left:950.70px;top:328.78px;font-size:15.26px;line-height:15.26px;color:#666666;letter-spacing:0.025px;-webkit-text-stroke:0.25px #ffffff;">Jamal</div>
<div class="t" style="left:954.35px;top:348.98px;font-size:15.26px;line-height:15.26px;color:#666666;letter-spacing:-0.350px;transform:scaleX(0.9450);transform-origin:0 0;-webkit-text-stroke:0.25px #ffffff;">Reed</div>
<div class="t" style="left:939.10px;top:371.08px;font-size:15.26px;line-height:15.26px;color:#666666;letter-spacing:-0.350px;-webkit-text-stroke:0.25px #ffffff;">Lead Line</div>
<div class="t" style="left:955.70px;top:395.75px;font-size:15.41px;line-height:15.41px;color:#666666;letter-spacing:-0.350px;transform:scaleX(0.9872);transform-origin:0 0;-webkit-text-stroke:0.25px #ffffff;">4PM</div>
<div class="t" style="left:1034.60px;top:328.78px;font-size:15.26px;line-height:15.26px;color:#666666;letter-spacing:-0.350px;transform:scaleX(0.9312);transform-origin:0 0;-webkit-text-stroke:0.25px #ffffff;">Leo</div>
<div class="t" style="left:1014.40px;top:348.98px;font-size:15.26px;line-height:15.26px;color:#666666;letter-spacing:0.700px;-webkit-text-stroke:0.25px #ffffff;">Martinez</div>
<div class="t" style="left:1030.40px;top:371.08px;font-size:15.26px;line-height:15.26px;color:#666666;letter-spacing:-0.267px;-webkit-text-stroke:0.25px #ffffff;">Prep</div>
<div class="t" style="left:1030.70px;top:395.75px;font-size:15.41px;line-height:15.41px;color:#666666;letter-spacing:-0.350px;transform:scaleX(0.9872);transform-origin:0 0;-webkit-text-stroke:0.25px #ffffff;">4PM</div>
<div class="t" style="left:1101.10px;top:328.78px;font-size:15.26px;line-height:15.26px;color:#666666;letter-spacing:0.425px;-webkit-text-stroke:0.25px #ffffff;">Maria</div>
<div class="t" style="left:1101.35px;top:348.98px;font-size:15.26px;line-height:15.26px;color:#666666;letter-spacing:-0.350px;transform:scaleX(0.9826);transform-origin:0 0;-webkit-text-stroke:0.25px #ffffff;">Lopez</div>
<div class="t" style="left:1098.45px;top:371.08px;font-size:15.26px;line-height:15.26px;color:#666666;letter-spacing:0.080px;-webkit-text-stroke:0.25px #ffffff;">Server</div>
<div class="t" style="left:1105.70px;top:395.75px;font-size:15.41px;line-height:15.41px;color:#666666;letter-spacing:-0.350px;transform:scaleX(0.9872);transform-origin:0 0;-webkit-text-stroke:0.25px #ffffff;">4PM</div>
<div class="t" style="left:1178.45px;top:328.78px;font-size:15.26px;line-height:15.26px;color:#666666;letter-spacing:0.100px;-webkit-text-stroke:0.25px #ffffff;">Sofia</div>
<div class="t" style="left:1170.00px;top:348.98px;font-size:15.26px;line-height:15.26px;color:#666666;letter-spacing:0.217px;-webkit-text-stroke:0.25px #ffffff;">Alvarez</div>
<div class="t" style="left:1180.40px;top:371.08px;font-size:15.26px;line-height:15.26px;color:#666666;letter-spacing:-0.267px;-webkit-text-stroke:0.25px #ffffff;">Prep</div>
<div class="t" style="left:1180.70px;top:395.75px;font-size:15.41px;line-height:15.41px;color:#666666;letter-spacing:-0.350px;transform:scaleX(0.9872);transform-origin:0 0;-webkit-text-stroke:0.25px #ffffff;">6PM</div>
<div class="t" style="left:1250.75px;top:328.78px;font-size:15.26px;line-height:15.26px;color:#666666;letter-spacing:-0.025px;-webkit-text-stroke:0.25px #ffffff;">Tanya</div>
<div class="t" style="left:1247.35px;top:348.98px;font-size:15.26px;line-height:15.26px;color:#666666;-webkit-text-stroke:0.25px #ffffff;">Brooks</div>
<div class="t" style="left:1255.05px;top:371.08px;font-size:15.26px;line-height:15.26px;color:#666666;letter-spacing:0.233px;-webkit-text-stroke:0.25px #ffffff;">Host</div>
<div class="t" style="left:1255.70px;top:395.75px;font-size:15.41px;line-height:15.41px;color:#666666;letter-spacing:-0.350px;transform:scaleX(0.9872);transform-origin:0 0;-webkit-text-stroke:0.25px #ffffff;">7PM</div>
<div class="t" style="left:532.27px;top:419.75px;font-size:15.41px;line-height:15.41px;color:#666666;letter-spacing:1.032px;-webkit-text-stroke:0.25px #ffffff;">40</div>
<div class="t" style="left:532.27px;top:502.25px;font-size:15.41px;line-height:15.41px;color:#666666;letter-spacing:1.032px;-webkit-text-stroke:0.25px #ffffff;">30</div>
<div class="t" style="left:532.27px;top:585.75px;font-size:15.41px;line-height:15.41px;color:#666666;letter-spacing:1.032px;-webkit-text-stroke:0.25px #ffffff;">20</div>
<div class="t" style="left:532.27px;top:670.95px;font-size:15.41px;line-height:15.41px;color:#666666;letter-spacing:1.032px;-webkit-text-stroke:0.25px #ffffff;">10</div>
<div class="t" style="left:541.90px;top:744.75px;font-size:15.41px;line-height:15.41px;color:#666666;-webkit-text-stroke:0.25px #ffffff;">0</div>
<div class="t" style="left:580.70px;top:773.95px;font-size:15.12px;line-height:15.12px;color:#666666;-webkit-text-stroke:0.25px #ffffff;">4PM</div>
<div class="t" style="left:655.70px;top:773.95px;font-size:15.12px;line-height:15.12px;color:#666666;-webkit-text-stroke:0.25px #ffffff;">4PM</div>
<div class="t" style="left:730.70px;top:773.95px;font-size:15.12px;line-height:15.12px;color:#666666;-webkit-text-stroke:0.25px #ffffff;">4PM</div>
<div class="t" style="left:805.70px;top:773.95px;font-size:15.12px;line-height:15.12px;color:#666666;-webkit-text-stroke:0.25px #ffffff;">4PM</div>
<div class="t" style="left:875.32px;top:773.95px;font-size:15.12px;line-height:15.12px;color:#666666;letter-spacing:0.784px;-webkit-text-stroke:0.25px #ffffff;">12PM</div>
<div class="t" style="left:954.78px;top:773.95px;font-size:15.12px;line-height:15.12px;color:#666666;letter-spacing:0.924px;-webkit-text-stroke:0.25px #ffffff;">7AM</div>
<div class="t" style="left:1029.78px;top:773.95px;font-size:15.12px;line-height:15.12px;color:#666666;letter-spacing:0.924px;-webkit-text-stroke:0.25px #ffffff;">6AM</div>
<div class="t" style="left:1104.78px;top:773.95px;font-size:15.12px;line-height:15.12px;color:#666666;letter-spacing:0.924px;-webkit-text-stroke:0.25px #ffffff;">8AM</div>
<div class="t" style="left:1175.32px;top:773.95px;font-size:15.12px;line-height:15.12px;color:#666666;letter-spacing:0.784px;-webkit-text-stroke:0.25px #ffffff;">10AM</div>
<div class="t" style="left:1250.91px;top:773.95px;font-size:15.12px;line-height:15.12px;color:#666666;letter-spacing:0.762px;-webkit-text-stroke:0.25px #ffffff;">11AM</div>
<div class="t" style="left:511.5px;top:589.8px;width:0;height:0"><div style="position:absolute;left:-60px;top:-8px;width:120px;text-align:center;font-size:15.4px;line-height:16px;color:#333;transform:rotate(-90deg);letter-spacing:0.2px">Current Hours</div></div>
<div class="t" style="left:1715.40px;top:215.42px;font-size:14.97px;line-height:14.97px;color:#333;letter-spacing:-0.350px;transform:scaleX(0.9370);transform-origin:0 0;">OT RISK FLAG</div>
<div class="t" style="left:1766.60px;top:239.53px;font-size:15.55px;line-height:15.55px;color:#555;letter-spacing:-0.350px;transform:scaleX(0.9848);transform-origin:0 0;">Close to OT</div>
<div class="t" style="left:1742.90px;top:264.80px;font-size:15.12px;line-height:15.12px;color:#555;letter-spacing:-0.350px;transform:scaleX(0.8852);transform-origin:0 0;">OK</div>
<div class="t" style="left:32.00px;top:814.78px;font-size:15.26px;line-height:15.26px;color:#666;letter-spacing:0.070px;">Data Source</div>
<div class="t" style="left:167.20px;top:814.65px;font-size:15.41px;line-height:15.41px;color:#2b2b2b;font-weight:bold;letter-spacing:-0.350px;transform:scaleX(0.9835);transform-origin:0 0;">ORIGIONAL</div>
<div class="t" style="left:268.70px;top:814.78px;font-size:15.26px;line-height:15.26px;color:#666;letter-spacing:-0.327px;">ON SHIFT NOW</div>
<div class="t" style="left:396.30px;top:814.78px;font-size:15.26px;line-height:15.26px;color:#666;letter-spacing:-0.200px;">INCOMING</div>
</body></html>
